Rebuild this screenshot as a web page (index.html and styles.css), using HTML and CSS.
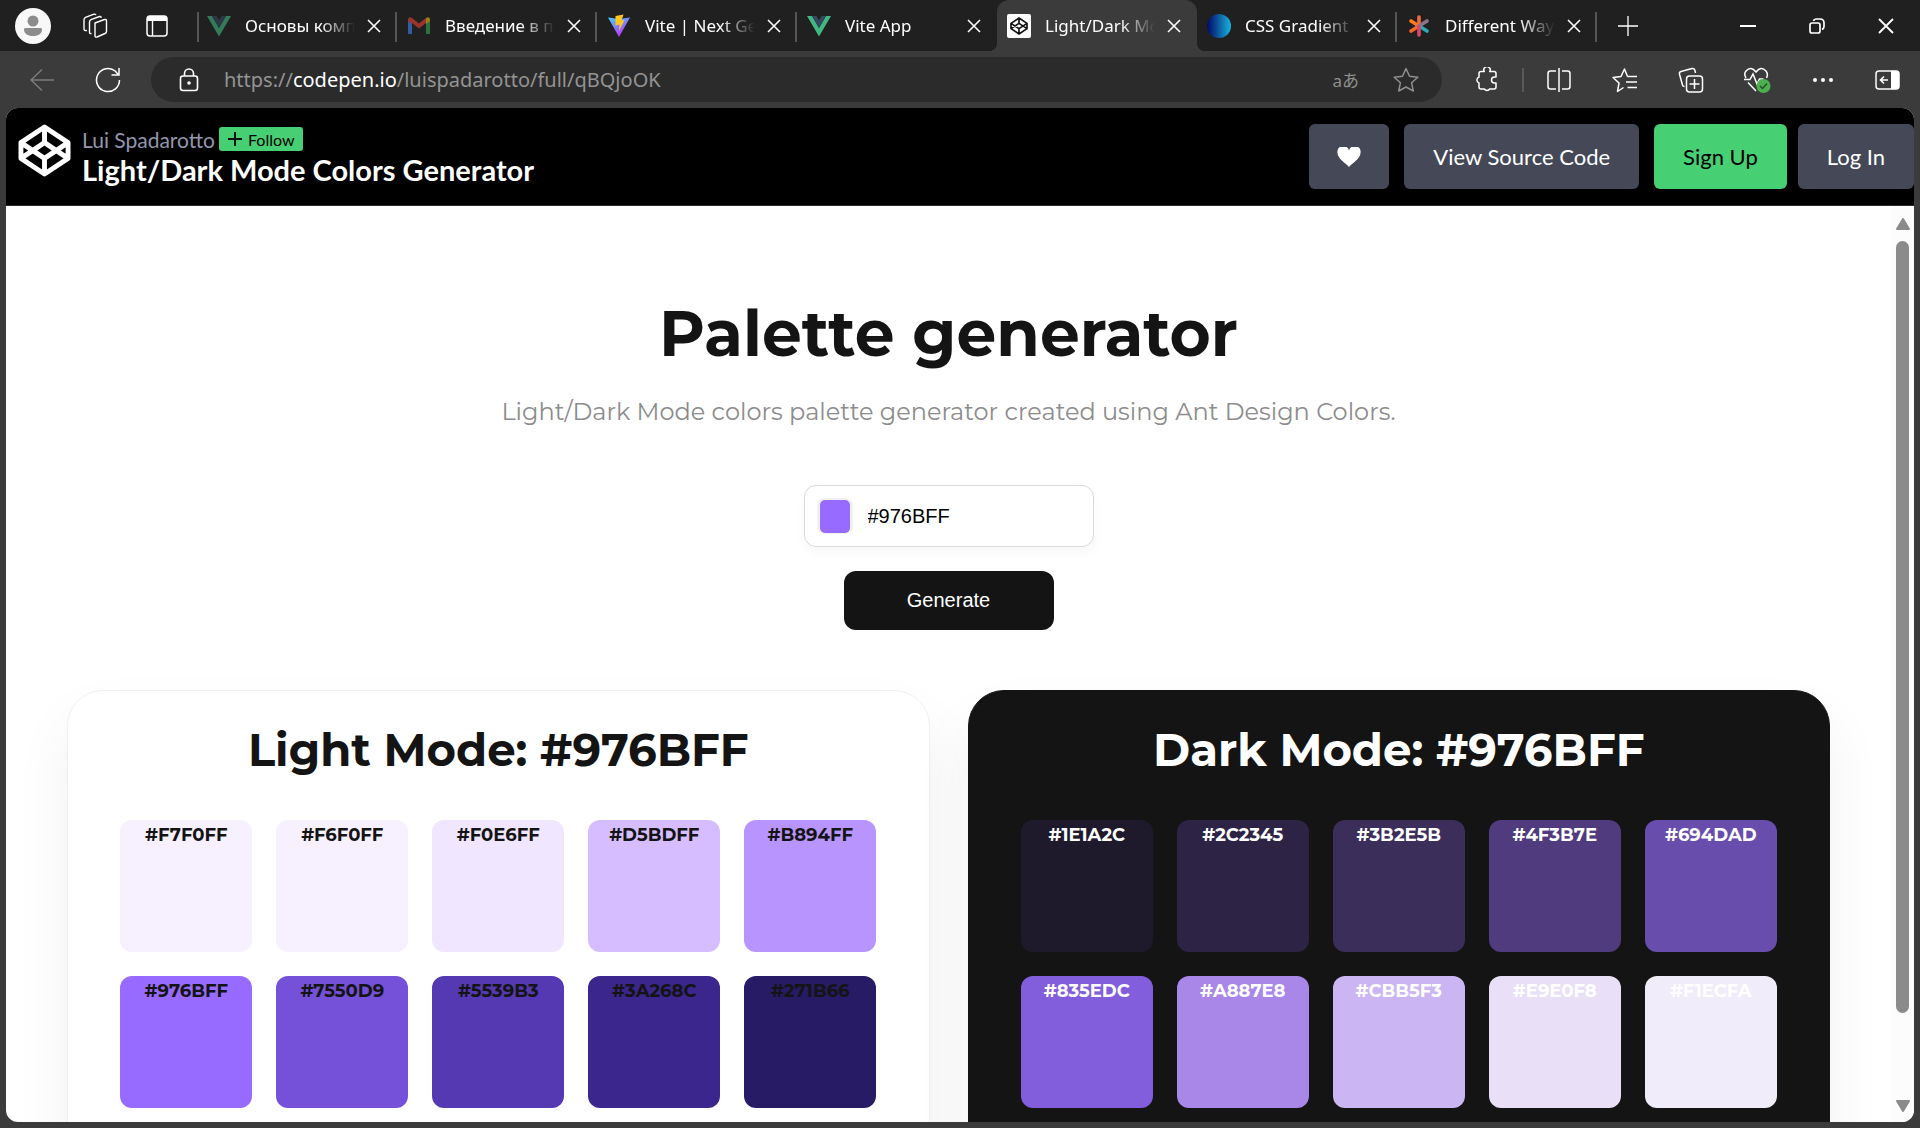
FILE: index.html
```html
<!DOCTYPE html>
<html lang="en">
<head>
<meta charset="utf-8">
<title>Light/Dark Mode Colors Generator</title>
<link rel="stylesheet" href="styles.css">
</head>
<body>
<svg class="defs" aria-hidden="true">
  <defs>
    <symbol id="close" viewBox="0 0 14 14"><path d="M1 1l12 12M13 1L1 13" fill="none" stroke="currentColor" stroke-width="1.6"/></symbol>
    <symbol id="vue" viewBox="0 0 24 24"><path d="M0 2h5l7 12 7-12h5L12 22.500z" fill="#41b883"/><path d="M5 2h4.500L12 6.300 14.500 2H19l-7 12z" fill="#35495e"/></symbol>
    <symbol id="codepen" viewBox="0 0 54 54"><path d="M27 3L51 19V35L27 51L3 35V19Z M27 3V19 M27 35V51 M3 19L27 35L51 19 M3 35L27 19L51 35" fill="none" stroke="currentColor" stroke-width="5" stroke-linejoin="round"/></symbol>
  </defs>
</svg>
<div class="window">
  <header class="tabstrip">
    <div class="tools">
      <button class="avatar" aria-label="Profile"><svg width="36" height="36" viewBox="0 0 36 36"><circle cx="18" cy="18" r="18" fill="#f8f8f8"/><circle cx="18" cy="13" r="5.500" fill="#8c8c8c"/><path d="M10 20h16q1 0 1 1.500c0 4-3.500 6.500-9 6.500s-9-2.500-9-6.500Q9 20 10 20z" fill="#8c8c8c"/></svg></button>
      <button class="tool" aria-label="Workspaces"><svg width="26" height="26" viewBox="0 0 26 26" fill="none" stroke="#fff" stroke-width="1.400" stroke-linejoin="round"><path d="M13 10l9.500-3.500q2-.5 2 1.500v10.500q0 1.500-1.500 2L15 24q-2 .6-2-1.500z"/><path d="M9.500 20.500q-2 .5-2-1.500V9q0-1.800 1.500-2.400L17.500 3.500q1.500-.3 1.700 1.300M5 17.500q-3 .5-3-1.500V7q0-2 1.500-2.600L12 1.200q1.500-.4 1.800 1"/></svg></button>
      <button class="tool" aria-label="Tab actions"><svg width="22" height="22" viewBox="0 0 22 22"><rect x="1" y="1" width="20" height="20" rx="3" fill="none" stroke="#fff" stroke-width="1.500"/><path d="M1 6V3q0-2 2-2h16q2 0 2 2v3z" fill="#fff"/><path d="M6.500 6v15" stroke="#fff" stroke-width="1.400"/></svg></button>
    </div>
    <nav class="tabs">
      <div class="tab"><svg class="fav dim"><use href="#vue"/></svg><a href="#" class="tab-title">Основы компонентов</a><button class="x" aria-label="Close tab"><svg><use href="#close"/></svg></button></div>
      <div class="tab"><svg class="fav dim" viewBox="0 0 24 24"><path d="M1 6l4 3v11H2q-1 0-1-1z" fill="#4285f4"/><path d="M19 9l4-3v13q0 1-1 1h-3z" fill="#34a853"/><path d="M1 6q0-4 4-2l7 5.500L19 4v5l-7 5.500L5 9v1L1 7z" fill="#ea4335"/><path d="M19 4q4-2 4 2v1l-4 3z" fill="#fbbc04"/></svg><a href="#" class="tab-title">Введение в программу</a><button class="x" aria-label="Close tab"><svg><use href="#close"/></svg></button></div>
      <div class="tab"><svg class="fav" viewBox="0 0 24 24"><defs><linearGradient id="vg" x1="0" y1="0" x2=".5" y2="1"><stop offset="0" stop-color="#41d1ff"/><stop offset="1" stop-color="#bd34fe"/></linearGradient></defs><path d="M1 3.500l11 1.500 11-1.500L12 23z" fill="url(#vg)"/><path d="M8.500 2l8-1.500-2 6 3-.5-5.500 11 .5-6.500-4 1z" fill="#ffc620"/></svg><a href="#" class="tab-title">Vite | Next Generation</a><button class="x" aria-label="Close tab"><svg><use href="#close"/></svg></button></div>
      <div class="tab last"><svg class="fav"><use href="#vue"/></svg><a href="#" class="tab-title">Vite App</a><button class="x" aria-label="Close tab"><svg><use href="#close"/></svg></button></div>
      <div class="tab active"><svg class="fav" viewBox="0 0 24 24"><rect width="24" height="24" rx="2" fill="#fff"/><svg x="3" y="3" width="18" height="18" color="#111"><use href="#codepen"/></svg></svg><a href="#" class="tab-title">Light/Dark Mode Colors</a><button class="x" aria-label="Close tab"><svg><use href="#close"/></svg></button></div>
      <div class="tab"><svg class="fav" viewBox="0 0 24 24"><defs><linearGradient id="cg"><stop offset="0" stop-color="#020a63"/><stop offset=".4" stop-color="#0b4a95"/><stop offset="1" stop-color="#18b5dc"/></linearGradient></defs><circle cx="12" cy="12" r="12" fill="url(#cg)"/></svg><a href="#" class="tab-title">CSS Gradient</a><button class="x" aria-label="Close tab"><svg><use href="#close"/></svg></button></div>
      <div class="tab"><svg class="fav" viewBox="0 0 24 24"><g fill="none" stroke-width="3.600" stroke-linecap="round"><path d="M12 12V3" stroke="#f26b3a"/><path d="M12 12L4 7" stroke="#ff7a1c"/><path d="M12 12L4 17" stroke="#f5652c"/><path d="M12 12l8-5" stroke="#8d7486"/><path d="M12 12l8 5" stroke="#2cabb5"/><path d="M12 21v-9" stroke="#d8476a"/></g></svg><a href="#" class="tab-title">Different Ways to</a><button class="x" aria-label="Close tab"><svg><use href="#close"/></svg></button></div>
    </nav>
    <button class="new-tab" aria-label="New tab"><svg width="22" height="22" viewBox="0 0 22 22"><path d="M11 1v20M1 11h20" stroke="#fff" stroke-width="1.300"/></svg></button>
    <div class="controls">
      <button aria-label="Minimize"><svg width="16" height="16" viewBox="0 0 16 16"><path d="M0 8h16" stroke="#fff" stroke-width="2"/></svg></button>
      <button aria-label="Restore"><svg width="16" height="16" viewBox="0 0 16 16" fill="none" stroke="#fff" stroke-width="1.700"><rect x="1" y="5" width="10" height="10" rx="2"/><path d="M4.500 3q.5-2 3-2H11q4 0 4 4v3.500q0 2-2 3"/></svg></button>
      <button aria-label="Close window"><svg width="16" height="16" viewBox="0 0 16 16"><path d="M1 1l14 14M15 1L1 15" stroke="#fff" stroke-width="1.800"/></svg></button>
    </div>
  </header>
  <div class="toolbar">
    <button class="icon" aria-label="Back"><svg width="24" height="24" viewBox="0 0 24 24" fill="none" stroke="#7d7d7d" stroke-width="1.500"><path d="M24 12H1M12 1.500L1 12l11 10.500"/></svg></button>
    <button class="icon" aria-label="Reload"><svg width="26" height="26" viewBox="0 0 26 26" fill="none" stroke="#fff" stroke-width="1.500"><path d="M24.500 13A11.500 11.500 0 1 1 20.500 4.300L23.500 8M24 1v7h-7.500"/></svg></button>
    <div class="address">
      <svg width="20" height="24" viewBox="0 0 20 24" fill="none" stroke="#fff" stroke-width="1.600"><rect x="1.500" y="8" width="17" height="14.500" rx="2.500"/><path d="M5.500 8V5.500a4.500 4.500 0 0 1 9 0V8"/><circle cx="10" cy="15" r="1" fill="#fff"/></svg>
      <div class="url" role="textbox" aria-label="Address">https://<b>codepen.io</b>/luispadarotto/full/qBQjoOK</div>
      <button class="translate" aria-label="Translate">aあ</button>
      <button class="favorite" aria-label="Favorite"><svg width="26" height="26" viewBox="0 0 26 26"><path d="M13 1.500l3.500 7.700 8.300 1-6.200 5.600 1.700 8.200L13 20l-7.300 4 1.700-8.200L1.200 10.200l8.300-1z" fill="none" stroke="#8f8f8f" stroke-width="1.500" stroke-linejoin="round"/></svg></button>
    </div>
    <div class="actions">
      <button class="icon" aria-label="Extensions"><svg width="26" height="26" viewBox="0 0 26 26" fill="none" stroke="#fff" stroke-width="1.500" stroke-linejoin="round"><path d="M7 4.500h3.300a3.200 3.200 0 1 1 5.400 0H20q2 0 2 2V10h-1.500a3 3 0 0 0 0 6H22v4q0 2-2 2h-4.300a3.200 3.200 0 0 1-5.400 0H7q-2 0-2-2v-4a3.200 3.200 0 0 1 0-6V6.500q0-2 2-2z"/></svg></button>
      <span class="divider"></span>
      <button class="icon" aria-label="Split screen"><svg width="24" height="24" viewBox="0 0 24 24" fill="none" stroke="#fff" stroke-width="1.500"><path d="M9 3H3.500Q1 3 1 5.500v13Q1 21 3.500 21H9M15 3h5.500Q23 3 23 5.500v13q0 2.500-2.500 2.500H15M12 0v24"/></svg></button>
      <button class="icon" aria-label="Favorites"><svg width="26" height="26" viewBox="0 0 26 26" fill="none" stroke="#fff" stroke-width="1.500" stroke-linejoin="round"><path d="M15.500 9.500L12.500 2 9 9.500 1 10.500l6 5.500L5.500 24.500l6-4M15.500 9.500H25M14 15h11M15.500 20.500H25"/></svg></button>
      <button class="icon" aria-label="Collections"><svg width="26" height="26" viewBox="0 0 26 26" fill="none" stroke="#fff" stroke-width="1.500"><rect x="8.500" y="9" width="16" height="16" rx="3"/><path d="M16.500 12v10M11.500 17h10M17.500 6l-.7-3q-.7-2-2.800-1.500L3 4.500Q1 5 1.500 7.200L4.500 18q.5 1.500 2 1.500"/></svg></button>
      <button class="icon" aria-label="Browser essentials"><svg width="28" height="26" viewBox="0 0 28 26"><path d="M3 11Q.5 7 3 4q5-5.500 10 1 5-6.500 10-1 2.500 3 .5 7M1 12.500h6l3-5.500 4 10 2.500-5h4M5 15.500l8 8.500" fill="none" stroke="#fff" stroke-width="1.500"/><circle cx="20.500" cy="19" r="7" fill="#4caf50"/><path d="M17 19l2.500 2.500 4.500-5" fill="none" stroke="#24502a" stroke-width="1.500"/></svg></button>
      <button class="icon" aria-label="More"><svg width="20" height="4" viewBox="0 0 20 4" fill="#fff"><circle cx="2" cy="2" r="2"/><circle cx="10" cy="2" r="2"/><circle cx="18" cy="2" r="2"/></svg></button>
      <button class="icon sidebar" aria-label="Sidebar"><svg width="25" height="20" viewBox="0 0 25 20"><rect x="1" y="1" width="23" height="18" rx="3" fill="none" stroke="#fff" stroke-width="1.500"/><path d="M16 1h6q2 0 2 2v14q0 2-2 2h-6z" fill="#fff"/><path d="M13 10H5.500M9 6.500L5.500 10 9 13.500" fill="none" stroke="#fff" stroke-width="1.600"/></svg></button>
    </div>
  </div>
  <div class="page">
    <header class="pen-header">
      <svg class="logo"><use href="#codepen"/></svg>
      <div class="pen-info">
        <div class="author"><a href="#">Lui Spadarotto</a><button class="follow"><svg width="16" height="16" viewBox="0 0 16 16"><path d="M8 1v14M1 8h14" stroke="#111" stroke-width="2"/></svg>Follow</button></div>
        <h1>Light/Dark Mode Colors Generator</h1>
      </div>
      <div class="pen-actions">
        <button class="btn heart" aria-label="Love"><svg width="24" height="20" viewBox="0 0 24 20"><path d="M12 20C9 16.500 .5 11.500 .5 6A5.800 5.800 0 0 1 12 3.500 5.800 5.800 0 0 1 23.500 6C23.500 11.500 15 16.500 12 20z" fill="#fff"/></svg></button>
        <button class="btn">View Source Code</button>
        <div class="auth"><button class="btn signup">Sign Up</button><button class="btn">Log In</button></div>
      </div>
    </header>
    <div class="frame">
      <main class="content">
        <h2 class="title">Palette generator</h2>
        <p class="lead">Light/Dark Mode colors palette generator created using Ant Design Colors.</p>
        <form class="form">
          <div class="field"><input type="color" value="#976bff" aria-label="Pick a color"><input type="text" value="#976BFF" aria-label="Color hex"></div>
          <button type="button" class="generate">Generate</button>
        </form>
        <div class="cards">
          <section class="card">
            <h3>Light Mode: #976BFF</h3>
            <ul class="swatches">
              <li style="background:#f7f0ff">#F7F0FF</li><li style="background:#f6f0ff">#F6F0FF</li><li style="background:#f0e6ff">#F0E6FF</li><li style="background:#d5bdff">#D5BDFF</li><li style="background:#b894ff">#B894FF</li>
              <li style="background:#976bff">#976BFF</li><li style="background:#7550d9">#7550D9</li><li style="background:#5539b3">#5539B3</li><li style="background:#3a268c">#3A268C</li><li style="background:#271b66">#271B66</li>
            </ul>
          </section>
          <section class="card dark">
            <h3>Dark Mode: #976BFF</h3>
            <ul class="swatches">
              <li style="background:#1e1a2c">#1E1A2C</li><li style="background:#2c2345">#2C2345</li><li style="background:#3b2e5b">#3B2E5B</li><li style="background:#4f3b7e">#4F3B7E</li><li style="background:#694dad">#694DAD</li>
              <li style="background:#835edc">#835EDC</li><li style="background:#a887e8">#A887E8</li><li style="background:#cbb5f3">#CBB5F3</li><li style="background:#e9e0f8">#E9E0F8</li><li style="background:#f1ecfa">#F1ECFA</li>
            </ul>
          </section>
        </div>
      </main>
      <div class="scrollbar" aria-hidden="true">
        <svg width="14" height="12" viewBox="0 0 14 12"><path d="M7 1L13 11H1z" fill="#8b8b8b" stroke="#8b8b8b" stroke-width="2" stroke-linejoin="round"/></svg>
        <div class="track"><div class="thumb"></div></div>
        <svg width="14" height="12" viewBox="0 0 14 12"><path d="M7 11L1 1h12z" fill="#8b8b8b" stroke="#8b8b8b" stroke-width="2" stroke-linejoin="round"/></svg>
      </div>
    </div>
  </div>
</div>
</body>
</html>
```
FILE: styles.css
```css
* { box-sizing: border-box; }

body {
  margin: 0;
  background: #3b3b3b;
  font-family: "Noto Sans", "Open Sans", sans-serif;
}

button {
  padding: 0;
  border: 0;
  background: none;
  color: inherit;
  font: inherit;
}

a { color: inherit; text-decoration: none; }
svg { display: block; flex: none; }
.defs { position: absolute; width: 0; height: 0; }

.window {
  display: flex;
  flex-direction: column;
  height: 100vh;
  overflow: hidden;
}

/* Tab strip */
.tabstrip {
  display: flex;
  flex: none;
  height: 51px;
  background: #202020;
  color: #fff;
}

.tools {
  display: flex;
  align-items: center;
  gap: 26px;
  width: 197px;
  padding-left: 15px;
}
.tool { display: flex; justify-content: center; width: 36px; }

.tabs { display: flex; }

.tab {
  position: relative;
  display: flex;
  align-items: center;
  width: 200px;
  padding: 0 16px 0 10px;
  font-size: 17px;
}
.tab::after {
  content: "";
  position: absolute;
  right: 0;
  top: 12px;
  width: 2px;
  height: 30px;
  background: #555;
}
.tab:first-child::before {
  content: "";
  position: absolute;
  left: 0;
  top: 12px;
  width: 2px;
  height: 30px;
  background: #555;
}
.tab.last::after { display: none; }

.tab.active { border-radius: 12px 12px 0 0; background: #3b3b3b; }
.tab.active::before,
.tab.active::after {
  content: "";
  position: absolute;
  top: auto;
  bottom: 0;
  width: 8px;
  height: 8px;
}
.tab.active::before { left: -8px; background: radial-gradient(circle at 0 0, #202020 8px, #3b3b3b 8px); }
.tab.active::after { right: -8px; background: radial-gradient(circle at 100% 0, #202020 8px, #3b3b3b 8px); }

.fav { width: 24px; height: 24px; margin-right: 14px; }
.dim { opacity: .6; }

.tab-title {
  flex: 1;
  min-width: 0;
  margin-right: 12px;
  overflow: hidden;
  white-space: nowrap;
  mask-image: linear-gradient(to right, #000 68%, transparent);
}

.x svg { width: 14px; height: 14px; }
.new-tab { display: flex; align-items: center; margin-left: 20px; }

.controls { display: flex; margin-left: auto; }
.controls button {
  display: flex;
  align-items: center;
  justify-content: center;
  width: 69px;
}

/* Toolbar */
.toolbar {
  display: flex;
  flex: none;
  align-items: center;
  height: 57px;
  padding: 0 2px 0 9px;
}
.icon {
  display: flex;
  align-items: center;
  justify-content: center;
  width: 66px;
  height: 45px;
}
.icon.sidebar { width: 62px; }
.address {
  display: flex;
  flex: 1;
  align-items: center;
  height: 45px;
  margin: 0 12px 0 10px;
  padding: 0 23px 0 28px;
  border-radius: 23px;
  background: #2b2b2b;
}
.url {
  flex: 1;
  margin-left: 25px;
  color: #949494;
  font-size: 20px;
}
.url b { color: #fff; font-weight: 400; }
.translate {
  margin-right: 34px;
  color: #8f8f8f;
  font-family: "Noto Sans", "Noto Sans CJK JP", sans-serif;
  font-size: 17px;
}
.actions { display: flex; align-items: center; }
.divider { width: 2px; height: 24px; margin: 0 2px; background: #595959; }

/* Pen page */
.page {
  display: flex;
  flex: 1;
  flex-direction: column;
  min-height: 0;
  margin: 0 6px 6px;
  overflow: hidden;
  border-radius: 12px;
  background: #fff;
}
.pen-header {
  display: flex;
  flex: none;
  height: 98px;
  padding-left: 12px;
  border-bottom: 1px solid #2c2c2c;
  background: #000;
  color: #fff;
  font-family: Lato, sans-serif;
}
.logo { width: 53px; height: 53px; margin: 16px 11px 0 0; }
.author {
  display: flex;
  align-items: center;
  gap: 4px;
  height: 24px;
  margin-top: 19px;
  color: #9396ad;
  font-size: 21px;
}
.follow {
  display: flex;
  align-items: center;
  gap: 5px;
  height: 24px;
  padding: 0 8px;
  border-radius: 3px;
  background: #47cf73;
  color: #000;
  font-size: 16px;
}
.pen-header h1 {
  margin: 2px 0 0;
  font-size: 29px;
  font-weight: 700;
  line-height: 34px;
}
.pen-actions {
  display: flex;
  gap: 15px;
  height: 65px;
  margin: 16px 0 0 auto;
}
.auth { display: flex; gap: 11px; }
.btn {
  padding: 0 29px;
  border-radius: 6px;
  background: #444857;
  font-size: 22px;
  white-space: nowrap;
}
.btn.heart { padding: 0 28px; }
.btn.signup { background: #47cf73; color: #000; }

/* Generator */
.frame { display: flex; flex: 1; min-height: 0; }
.content {
  flex: 1;
  padding: 84px 61px 0;
  overflow: hidden;
  color: #141414;
  font-family: Montserrat, Inter, sans-serif;
  text-align: center;
}
.title {
  margin: 0;
  font-size: 63px;
  font-weight: 700;
  line-height: 88px;
}
.lead {
  margin: 16px 0 0;
  color: #8c8c8c;
  font-size: 24px;
  line-height: 36px;
}
.form {
  display: flex;
  flex-direction: column;
  align-items: center;
  gap: 24px;
  margin-top: 55px;
  font-family: "Liberation Sans", Arial, sans-serif;
}
.field {
  display: flex;
  align-items: center;
  gap: 15px;
  width: 290px;
  height: 62px;
  padding: 0 12px;
  border: 1px solid #d9d9d9;
  border-radius: 12px;
  box-shadow: 0 6px 12px rgba(0, 0, 0, .03);
}
.field input { border: 0; font: inherit; font-size: 20px; }
.field input[type="color"] {
  flex: none;
  width: 36px;
  height: 36px;
  padding: 2px 3px 1px;
  border-radius: 8px;
  background: #f0f0f0;
}
.field input::-webkit-color-swatch-wrapper { padding: 0; }
.field input::-webkit-color-swatch { border: 0; border-radius: 5px; }
.field input[type="text"] {
  flex: 1;
  min-width: 0;
  padding: 0;
  background: none;
  color: #000;
}
.generate {
  width: 210px;
  height: 59px;
  border-radius: 12px;
  background: #141414;
  color: #fff;
  font-size: 20px;
}

.cards {
  display: grid;
  grid-template-columns: 1fr 1fr;
  gap: 38px;
  margin-top: 60px;
}
.card {
  height: 560px;
  padding: 31px 0;
  border: 1px solid #f0f0f0;
  border-radius: 36px;
  background: #fff;
  box-shadow: 0 30px 60px rgba(0, 0, 0, .06);
}
.card.dark { border-color: #141414; background: #141414; color: #fff; }
.card h3 {
  margin: 0;
  font-size: 45px;
  font-weight: 700;
  line-height: 56px;
}
.swatches {
  display: grid;
  grid-template-columns: repeat(5, 132px);
  justify-content: center;
  gap: 24px;
  margin: 42px 0 0;
  padding: 0;
  list-style: none;
}
.swatches li {
  height: 132px;
  padding-top: 3px;
  border-radius: 12px;
  font-size: 18px;
  font-weight: 700;
  line-height: 24px;
}

.scrollbar {
  display: flex;
  flex: none;
  flex-direction: column;
  align-items: center;
  gap: 11px;
  width: 23px;
  padding: 12px 0 10px;
  background: #fcfcfc;
}
.track { flex: 1; }
.thumb { width: 13px; height: 91%; border-radius: 7px; background: #8b8b8b; }
```
